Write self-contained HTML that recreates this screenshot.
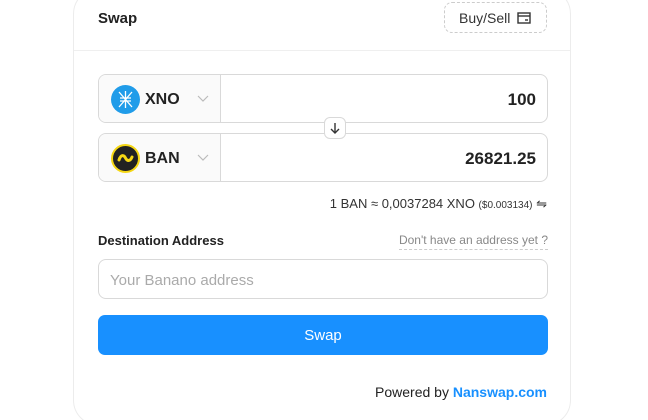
<!DOCTYPE html><html><head><style>
html,body{margin:0;width:648px;height:420px;overflow:hidden}
body{background:#fff;font-family:"Liberation Sans",sans-serif;position:relative;color:#222}
.card{position:absolute;left:73px;top:-12px;width:498px;height:438px;border:1px solid #ececec;border-radius:26px;box-sizing:border-box}
.a{position:absolute}
.row{position:absolute;left:98px;width:450px;height:49px;border:1px solid #d9d9d9;border-radius:8px;box-sizing:border-box;overflow:hidden}
.sel{position:absolute;left:0;top:0;width:121px;height:100%;background:#fafafa;border-right:1px solid #d9d9d9}
.ic{position:absolute;left:12px;top:10px;width:29px;height:29px;border-radius:50%}
.tk{position:absolute;left:46px;top:16px;font-size:16px;font-weight:bold;color:#222}
.chev{position:absolute;left:98px;top:20px}
.val{position:absolute;right:11px;top:15px;font-size:17px;font-weight:bold;color:#222}
</style></head><body>
<div class="card"></div>
<div class="a" style="left:98px;top:10px;font-size:15px;font-weight:bold;color:#222">Swap</div>
<div class="a" style="left:444px;top:2px;width:103px;height:31px;border:1px dashed #ccc;border-radius:8px;box-sizing:border-box;font-size:14px;color:#333">
<span class="a" style="left:14px;top:7px">Buy/Sell</span>
<svg class="a" style="left:72px;top:9px" width="14" height="12" viewBox="0 0 14 12"><rect x="1" y="1" width="12" height="10" fill="none" stroke="#333" stroke-width="1.4"/><line x1="1" y1="4" x2="13" y2="4" stroke="#333" stroke-width="1.4"/><line x1="8" y1="8" x2="11" y2="8" stroke="#333" stroke-width="1.4"/></svg></div>
<div class="a" style="left:74px;top:50px;width:496px;height:1px;background:#efefef"></div>
<div class="row" style="top:74px"><div class="sel">
<div class="ic" style="background:#209ce9"><svg width="29" height="29" viewBox="0 0 29 29" stroke="#fff" stroke-width="1.3" fill="none"><line x1="8" y1="7" x2="21" y2="22"/><line x1="21" y1="7" x2="8" y2="22"/><line x1="14.5" y1="6" x2="14.5" y2="23"/><line x1="9" y1="13" x2="20" y2="13"/><line x1="9" y1="16" x2="20" y2="16"/></svg></div>
<div class="tk">XNO</div><svg class="chev" width="12" height="8" viewBox="0 0 12 8"><path d="M1 1 L6 6 L11 1" stroke="#bbb" stroke-width="1.2" fill="none"/></svg></div><div class="val">100</div></div>
<div class="row" style="top:133px"><div class="sel">
<div class="ic" style="background:#222;border:2px solid #f5d714;box-sizing:border-box"><svg width="25" height="25" viewBox="0 0 25 25"><path d="M6 14 C8 8 11 9 12.5 12 C14 15 17 16 19 11" stroke="#f5d714" stroke-width="3" fill="none" stroke-linecap="round"/></svg></div>
<div class="tk">BAN</div><svg class="chev" width="12" height="8" viewBox="0 0 12 8"><path d="M1 1 L6 6 L11 1" stroke="#bbb" stroke-width="1.2" fill="none"/></svg></div><div class="val">26821.25</div></div>
<div class="a" style="left:324px;top:117px;width:22px;height:22px;border:1px solid #d9d9d9;border-radius:6px;background:#fff;box-sizing:border-box"><svg width="20" height="20" viewBox="0 0 20 20" stroke="#333" stroke-width="1.4" fill="none"><line x1="10" y1="5" x2="10" y2="15"/><path d="M6 11 L10 15 L14 11"/></svg></div>
<div class="a" style="right:101px;top:196px;font-size:13px;color:#333">1 BAN ≈ 0,0037284 XNO <span style="font-size:10px">($0.003134)</span> ⇋</div>
<div class="a" style="left:98px;top:233px;font-size:13px;font-weight:bold;color:#222">Destination Address</div>
<div class="a" style="right:100px;top:233px;font-size:12px;color:#888;border-bottom:1px dashed #ccc;padding-bottom:2px">Don't have an address yet ?</div>
<div class="a" style="left:98px;top:259px;width:450px;height:40px;border:1px solid #d9d9d9;border-radius:8px;box-sizing:border-box;font-size:15px;color:#aaa;padding:12px 11px">Your Banano address</div>
<div class="a" style="left:98px;top:315px;width:450px;height:40px;background:#1890ff;border-radius:7px;color:#fff;font-size:15px;text-align:center;line-height:42px">Swap</div>
<div class="a" style="right:101px;top:384px;font-size:14px;color:#222">Powered by <span style="color:#1890ff;font-weight:bold">Nanswap.com</span></div>
</body></html>
